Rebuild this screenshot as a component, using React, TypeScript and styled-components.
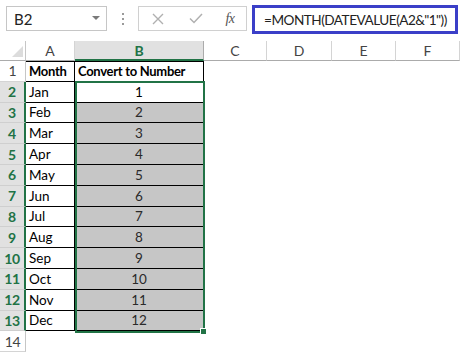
import React from 'react';
import styled, { createGlobalStyle } from 'styled-components';

const Global = createGlobalStyle`
  html, body { margin: 0; padding: 0; background: #fff; }
  body { font-family: Lato, "Liberation Sans", sans-serif; }
`;

const GREEN = '#217346';

const Page = styled.div`
  width: 464px;
  height: 356px;
  overflow: hidden;
  background: #fff;
`;

const Toolbar = styled.div`
  display: flex;
  align-items: flex-start;
  height: 41px;
  padding: 6px 0 0 6px;
  box-sizing: border-box;
`;

const NameBox = styled.div`
  width: 101px;
  height: 25px;
  box-sizing: border-box;
  border: 1px solid #c6c6c6;
  display: flex;
  align-items: center;
  justify-content: space-between;
  padding: 0 6px 0 7px;
  font-size: 15px;
  color: #222;
`;

const Caret = styled.span`
  width: 0;
  height: 0;
  border-left: 4px solid transparent;
  border-right: 4px solid transparent;
  border-top: 4px solid #7a7a7a;
  margin-top: -2px;
`;

const Dots = styled.div`
  display: flex;
  flex-direction: column;
  gap: 3px;
  margin: 7px 0 0 15px;
  span {
    width: 2px;
    height: 2px;
    background: #9a9a9a;
  }
`;

const FxBox = styled.div`
  width: 109px;
  height: 25px;
  box-sizing: border-box;
  border: 1px solid #d0d0d0;
  margin-left: 14px;
  display: flex;
  align-items: center;
`;

const FxButton = styled.span<{ $w: number }>`
  width: ${(p) => p.$w}px;
  display: flex;
  align-items: center;
  justify-content: center;
`;

const FxLabel = styled.span`
  font-family: "Liberation Serif", serif;
  font-style: italic;
  font-size: 14px;
  color: #555;
  letter-spacing: -0.5px;
`;

const FormulaInput = styled.div`
  width: 206px;
  height: 29px;
  box-sizing: border-box;
  border: 3px solid #3b3fc8;
  margin: -1px 0 0 5px;
  display: flex;
  align-items: center;
  padding-left: 9px;
  font-size: 13.6px;
  letter-spacing: -0.5px;
  color: #222;
  white-space: nowrap;
  overflow: hidden;
`;

const Sheet = styled.div`
  display: grid;
  grid-template-columns: 26px 49px 129px 63px 65px 64px 64px 4px;
  grid-template-rows: 20px repeat(14, 20.8px);
  font-size: 13.5px;
`;

type Pos = { $row: number; $col: number };

const place = (p: Pos) => `grid-row: ${p.$row}; grid-column: ${p.$col};`;

const Corner = styled.div`
  grid-row: 1;
  grid-column: 1;
  box-sizing: border-box;
  border-right: 1px solid #c6c6c6;
  border-bottom: 1px solid #ababab;
  position: relative;
  &::after {
    content: '';
    position: absolute;
    right: 2px;
    bottom: 3px;
    width: 0;
    height: 0;
    border-left: 11px solid transparent;
    border-bottom: 11px solid #dcdcdc;
  }
`;

const ColHead = styled.div<Pos & { $sel?: boolean }>`
  ${place}
  box-sizing: border-box;
  display: flex;
  align-items: center;
  justify-content: center;
  background: ${(p) => (p.$sel ? '#e1e1e1' : '#fff')};
  border-right: 1px solid ${(p) => (p.$sel ? '#ababab' : '#d4d4d4')};
  border-bottom: ${(p) => (p.$sel ? `2px solid ${GREEN}` : '1px solid #ababab')};
  color: ${(p) => (p.$sel ? GREEN : '#444')};
  font-weight: ${(p) => (p.$sel ? 700 : 400)};
  font-size: 14px;
  padding-top: ${(p) => (p.$sel ? '1px' : '0')};
`;

const RowHead = styled.div<Pos & { $sel?: boolean }>`
  ${place}
  box-sizing: border-box;
  display: flex;
  align-items: center;
  justify-content: center;
  background: ${(p) => (p.$sel ? '#e1e1e1' : '#fff')};
  border-bottom: 1px solid ${(p) => (p.$sel ? '#cfcfcf' : '#d4d4d4')};
  border-right: ${(p) => (p.$sel ? `2px solid ${GREEN}` : '1px solid #c6c6c6')};
  color: ${(p) => (p.$sel ? GREEN : '#444')};
  font-weight: ${(p) => (p.$sel ? 700 : 400)};
  font-size: 14px;
  letter-spacing: -0.3px;
`;

const Cell = styled.div<Pos & { $bold?: boolean; $center?: boolean; $shade?: boolean; $top?: boolean }>`
  ${place}
  box-sizing: border-box;
  display: flex;
  align-items: center;
  justify-content: ${(p) => (p.$center ? 'center' : 'flex-start')};
  padding-left: ${(p) => (p.$center ? '0' : '3px')};
  background: ${(p) => (p.$shade ? '#c6c6c6' : '#fff')};
  border-right: 1px solid #000;
  border-bottom: 1px solid #000;
  border-top: ${(p) => (p.$top ? '1px solid #000' : 'none')};
  font-weight: ${(p) => (p.$bold ? 700 : 400)};
  font-size: ${(p) => (p.$bold ? '13px' : '13.5px')};
  letter-spacing: ${(p) => (p.$bold ? '-0.3px' : '0')};
  color: ${(p) => (p.$shade ? '#2a2a2a' : '#000')};
  white-space: nowrap;
`;

const Selection = styled.div`
  grid-row: 3 / 15;
  grid-column: 3;
  box-sizing: border-box;
  border: 2px solid ${GREEN};
  margin: -1px -1px -2px 0;
  position: relative;
  pointer-events: none;
`;

const FillHandle = styled.span`
  position: absolute;
  right: -4px;
  bottom: -4px;
  width: 5px;
  height: 5px;
  background: ${GREEN};
  border: 1px solid #fff;
`;

const months = ['Jan', 'Feb', 'Mar', 'Apr', 'May', 'Jun', 'Jul', 'Aug', 'Sep', 'Oct', 'Nov', 'Dec'];
const cols = ['A', 'B', 'C', 'D', 'E', 'F'];

export default function App() {
  return (
    <Page>
      <Global />
      <Toolbar>
        <NameBox>
          <span>B2</span>
          <Caret />
        </NameBox>
        <Dots>
          <span />
          <span />
          <span />
        </Dots>
        <FxBox>
          <FxButton $w={38}>
            <svg width="12" height="12" viewBox="0 0 12 12">
              <path d="M1 1 L11 11 M11 1 L1 11" stroke="#b0b0b0" strokeWidth="1.4" fill="none" />
            </svg>
          </FxButton>
          <FxButton $w={38}>
            <svg width="14" height="11" viewBox="0 0 14 11">
              <path d="M1 5.5 L5 9.5 L13 1" stroke="#b0b0b0" strokeWidth="1.5" fill="none" />
            </svg>
          </FxButton>
          <FxButton $w={30}>
            <FxLabel>fx</FxLabel>
          </FxButton>
        </FxBox>
        <FormulaInput>=MONTH(DATEVALUE(A2&amp;"1"))</FormulaInput>
      </Toolbar>
      <Sheet>
        <Corner />
        {cols.map((c, i) => (
          <ColHead key={c} $row={1} $col={i + 2} $sel={c === 'B'}>
            {c}
          </ColHead>
        ))}
        {Array.from({ length: 14 }, (_, i) => (
          <RowHead key={i} $row={i + 2} $col={1} $sel={i >= 1 && i <= 12}>
            {i + 1}
          </RowHead>
        ))}
        <Cell $row={2} $col={2} $bold $top>
          Month
        </Cell>
        <Cell $row={2} $col={3} $bold $top>
          Convert to Number
        </Cell>
        {months.map((m, i) => (
          <React.Fragment key={m}>
            <Cell $row={i + 3} $col={2}>
              {m}
            </Cell>
            <Cell $row={i + 3} $col={3} $center $shade={i > 0}>
              {i + 1}
            </Cell>
          </React.Fragment>
        ))}
        <Selection>
          <FillHandle />
        </Selection>
      </Sheet>
    </Page>
  );
}
